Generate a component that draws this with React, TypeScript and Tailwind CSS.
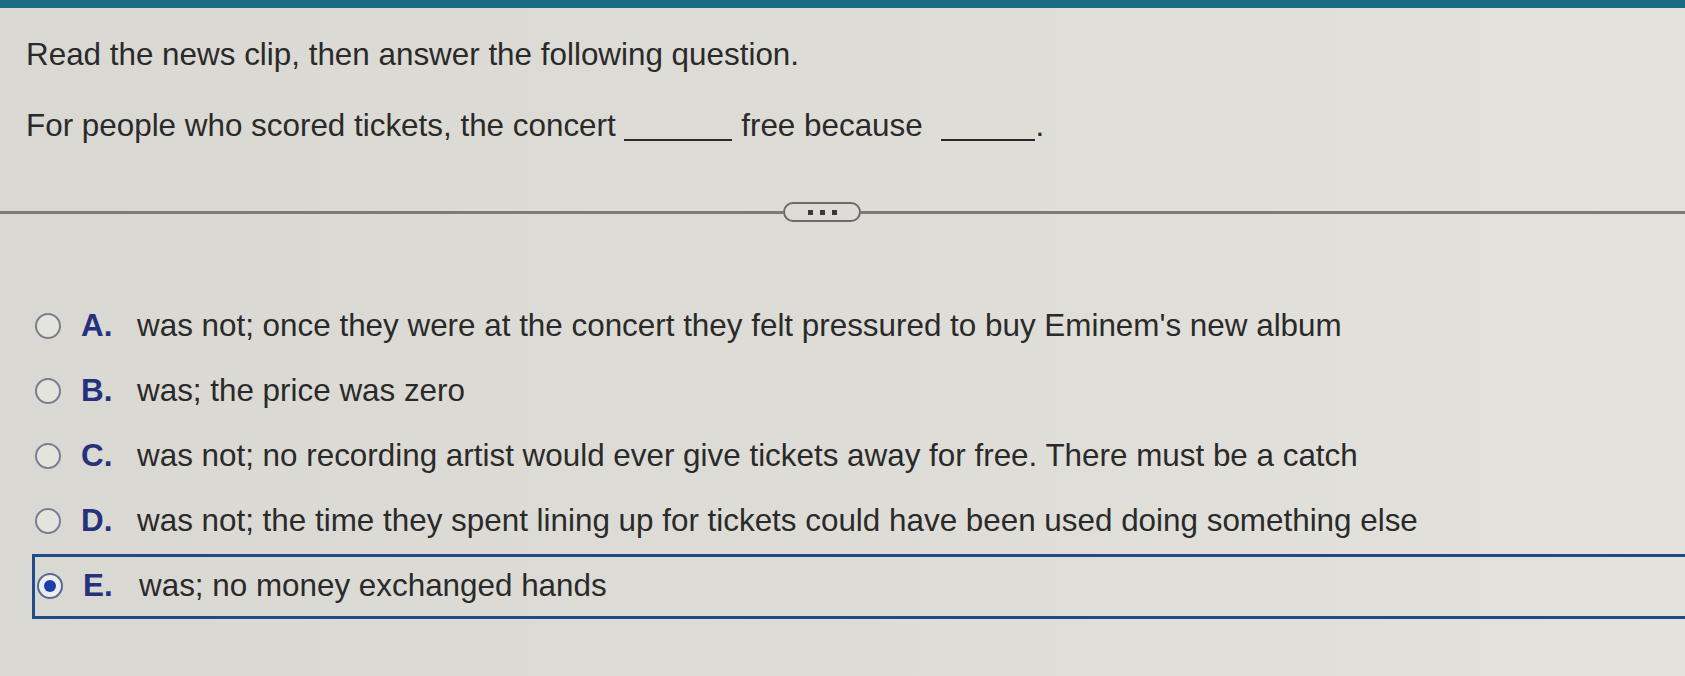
const options = [
  { key: "A", text: "was not; once they were at the concert they felt pressured to buy Eminem's new album" },
  { key: "B", text: "was; the price was zero" },
  { key: "C", text: "was not; no recording artist would ever give tickets away for free. There must be a catch" },
  { key: "D", text: "was not; the time they spent lining up for tickets could have been used doing something else" },
  { key: "E", text: "was; no money exchanged hands" },
];

const selected = "E";

const Radio = ({ checked }: { checked: boolean }) => (
  <span
    className={
      checked
        ? "flex h-[26px] w-[26px] shrink-0 items-center justify-center rounded-full border-[2px] border-[#59698f] bg-[#eceef2]"
        : "flex h-[26px] w-[26px] shrink-0 rounded-full border-[2px] border-[#7b7e8e] bg-[#e3e3e0]"
    }
  >
    {checked && <span className="h-[12px] w-[12px] rounded-full bg-[#1d3ea6]" />}
  </span>
);

export default function App() {
  return (
    <div
      className="h-[676px] w-[1685px] overflow-hidden bg-linear-to-r from-[#d9d8d2] via-[#dedcd6] to-[#e3e2dd] text-[#2a2a2a]"
      style={{ fontFamily: '"Liberation Sans", Arial, sans-serif' }}
    >
      <div className="h-[8px] bg-[#1b6a86]" />
      <div className="pl-[26px] pt-[29px] text-[31.4px] leading-[36px]">
        <p>Read the news clip, then answer the following question.</p>
        <p className="mt-[35px]">
          For people who scored tickets, the concert{" "}
          <span className="inline-block w-[108px] border-b-[2px] border-[#2a2a2a] align-[-5px]" /> free because{" "}
          <span className="ml-[10px] inline-block w-[94px] border-b-[2px] border-[#2a2a2a] align-[-5px]" />.
        </p>
      </div>

      <div className="mt-[58px] flex h-[20px] items-center">
        <div className="h-[3px] w-[783px] bg-[#7b7b78]" />
        <div className="flex h-[20px] w-[78px] items-center justify-center gap-[7px] rounded-full border-[2px] border-[#6a6a68]">
          <span className="h-[5px] w-[5px] bg-[#3a3a3a]" />
          <span className="h-[5px] w-[5px] bg-[#3a3a3a]" />
          <span className="h-[5px] w-[5px] bg-[#3a3a3a]" />
        </div>
        <div className="h-[3px] flex-1 bg-[#7b7b78]" />
      </div>

      <div className="mt-[86px] flex flex-col gap-[29px] text-[31.4px] leading-[36px]">
        {options.map((o) => {
          const isSel = o.key === selected;
          return (
            <div
              key={o.key}
              className={
                isSel
                  ? "-my-[14.5px] ml-[32px] -mr-[20px] flex items-center border-[3px] border-[#1f4b88] py-[11.5px] pl-[2px]"
                  : "ml-[35px] flex items-center"
              }
            >
              <Radio checked={isSel} />
              <span className="ml-[20px] w-[56px] font-bold text-[#25317e]">{o.key}.</span>
              <span>{o.text}</span>
            </div>
          );
        })}
      </div>
    </div>
  );
}
